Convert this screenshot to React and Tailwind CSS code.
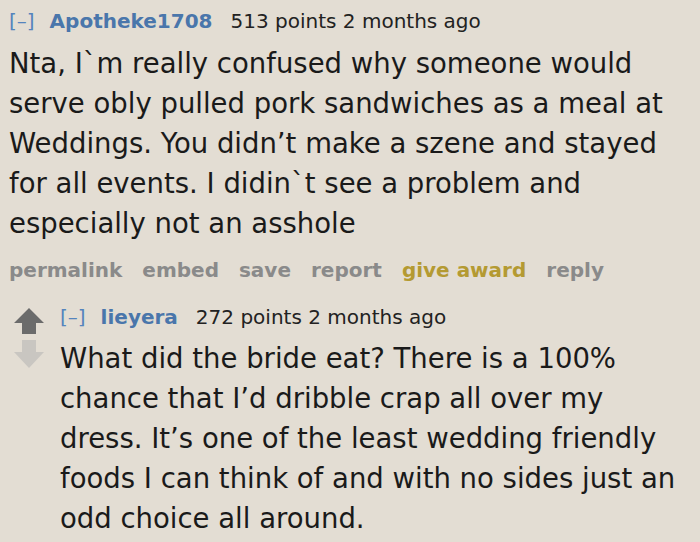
import React from 'react';

const font = { fontFamily: '"DejaVu Sans", Verdana, sans-serif' };

const Lines = ({ lines }) => (
  <div className="text-[27.5px] leading-[40px] text-[#1a1a1a] whitespace-nowrap">
    {lines.map((l, i) => (
      <div key={i}>{l}</div>
    ))}
  </div>
);

const Header = ({ author, points, lh }) => (
  <div className={`whitespace-nowrap text-[20px] ${lh}`}>
    <span className="text-[#5584bd]">[–]</span>
    <span className="ml-[15px] font-bold text-[#4a76ab]">{author}</span>
    <span className="ml-[18px] text-[#222]">{points} points 2 months ago</span>
  </div>
);

const ArrowUp = ({ color }) => (
  <svg width="30" height="26" viewBox="0 0 30 26">
    <path d="M15 0 L30 15 L22 15 L22 26 L8 26 L8 15 L0 15 Z" fill={color} />
  </svg>
);

const ArrowDown = ({ color }) => (
  <svg width="30" height="28" viewBox="0 0 30 28">
    <path d="M8 0 L22 0 L22 12 L30 12 L15 28 L0 12 L8 12 Z" fill={color} />
  </svg>
);

export default function App() {
  return (
    <div className="w-[700px] h-[542px] overflow-hidden bg-[#e3ddd3]" style={font}>
      <div className="pl-[9px]">
        <Header author="Apotheke1708" points="513" lh="leading-[42px]" />
        <div className="mt-[1px]">
          <Lines
            lines={[
              'Nta, I`m really confused why someone would',
              'serve obly pulled pork sandwiches as a meal at',
              'Weddings. You didn’t make a szene and stayed',
              'for all events. I didin`t see a problem and',
              'especially not an asshole',
            ]}
          />
        </div>
        <div className="mt-[7px] flex gap-[20px] text-[20px] leading-[40px] font-bold text-[#8a8a8a] whitespace-nowrap">
          <span>permalink</span>
          <span>embed</span>
          <span>save</span>
          <span>report</span>
          <span className="text-[#b49a32]">give award</span>
          <span>reply</span>
        </div>
      </div>
      <div className="flex mt-[7px]">
        <div className="w-[60px] flex flex-col items-center pt-[11px] gap-[6px] pr-[2px]">
          <ArrowUp color="#6b6b6b" />
          <ArrowDown color="#c9c6c1" />
        </div>
        <div>
          <Header author="lieyera" points="272" lh="leading-[41px]" />
          <Lines
            lines={[
              'What did the bride eat? There is a 100%',
              'chance that I’d dribble crap all over my',
              'dress. It’s one of the least wedding friendly',
              'foods I can think of and with no sides just an',
              'odd choice all around.',
            ]}
          />
        </div>
      </div>
    </div>
  );
}
